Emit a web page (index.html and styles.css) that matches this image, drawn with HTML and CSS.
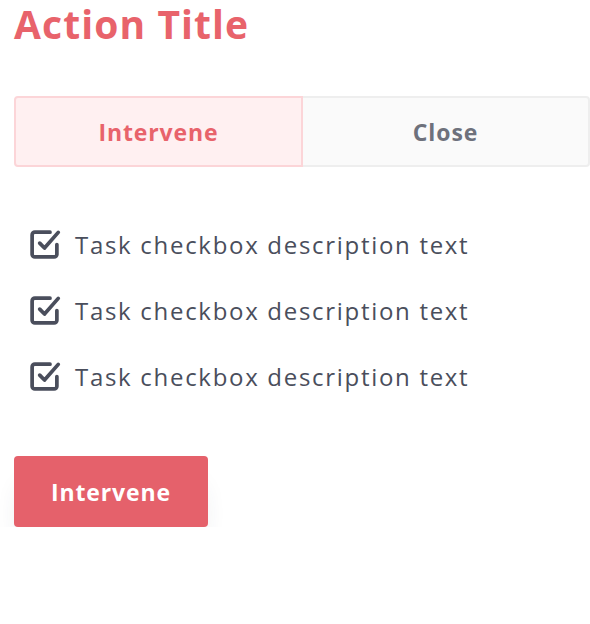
FILE: index.html
```
<!DOCTYPE html>
<html>
<head>
<meta charset="utf-8">
<link rel="stylesheet" href="styles.css">
</head>
<body>
<div class="page">
  <h1 class="title">Action Title</h1>
  <div class="segment">
    <button class="seg seg-active">Intervene</button>
    <button class="seg seg-idle">Close</button>
  </div>
  <ul class="tasks">
    <li class="task">
      <svg class="check" viewBox="0 0 24 24" fill="none" stroke="currentColor" stroke-width="2.7" stroke-linecap="round" stroke-linejoin="round"><polyline points="8.5 11 12 14.6 22 3.2"/><path d="M21 12v7a2 2 0 0 1-2 2H5a2 2 0 0 1-2-2V5a2 2 0 0 1 2-2h11"/></svg>
      <span class="task-text">Task checkbox description text</span>
    </li>
    <li class="task">
      <svg class="check" viewBox="0 0 24 24" fill="none" stroke="currentColor" stroke-width="2.7" stroke-linecap="round" stroke-linejoin="round"><polyline points="8.5 11 12 14.6 22 3.2"/><path d="M21 12v7a2 2 0 0 1-2 2H5a2 2 0 0 1-2-2V5a2 2 0 0 1 2-2h11"/></svg>
      <span class="task-text">Task checkbox description text</span>
    </li>
    <li class="task">
      <svg class="check" viewBox="0 0 24 24" fill="none" stroke="currentColor" stroke-width="2.7" stroke-linecap="round" stroke-linejoin="round"><polyline points="8.5 11 12 14.6 22 3.2"/><path d="M21 12v7a2 2 0 0 1-2 2H5a2 2 0 0 1-2-2V5a2 2 0 0 1 2-2h11"/></svg>
      <span class="task-text">Task checkbox description text</span>
    </li>
  </ul>
  <button class="primary">Intervene</button>
</div>
</body>
</html>
```
FILE: styles.css
```
html, body {
  margin: 0;
  padding: 0;
  background: #ffffff;
}
.page {
  padding: 0 0 0 14px;
  font-family: "Open Sans", "Liberation Sans", sans-serif;
}
.title {
  margin: 0;
  font-size: 39px;
  line-height: 48px;
  font-weight: 700;
  color: #e8636b;
  letter-spacing: 1.1px;
}
.segment {
  display: flex;
  margin-top: 48px;
  width: 576px;
  height: 71px;
}
.seg {
  flex: 1;
  font-family: inherit;
  font-size: 23px;
  font-weight: 700;
  letter-spacing: 0.9px;
  margin: 0;
  padding: 0;
}
.seg-active {
  background: #fff0f1;
  border: 2px solid #fcd5d8;
  border-radius: 4px 0 0 4px;
  color: #e8636b;
}
.seg-idle {
  background: #fafafa;
  border: 2px solid #eeeeee;
  border-left: none;
  border-radius: 0 4px 4px 0;
  color: #6e717c;
}
.tasks {
  list-style: none;
  margin: 62px 0 0 0;
  padding: 0 0 0 14px;
  display: flex;
  flex-direction: column;
  gap: 36px;
}
.task {
  display: flex;
  align-items: center;
  gap: 14px;
  height: 30px;
}
.check {
  width: 33px;
  height: 33px;
  color: #4a4e5c;
  flex: none;
}
.task-text {
  font-size: 24px;
  color: #4a4e5c;
  letter-spacing: 1.7px;
  white-space: nowrap;
}
.primary {
  margin-top: 65px;
  width: 194px;
  height: 71px;
  border: none;
  border-radius: 4px;
  background: #e5616b;
  color: #ffffff;
  font-family: inherit;
  font-size: 23px;
  font-weight: 700;
  letter-spacing: 0.9px;
  box-shadow: 0 22px 28px -12px rgba(50, 60, 80, 0.2);
}
```
